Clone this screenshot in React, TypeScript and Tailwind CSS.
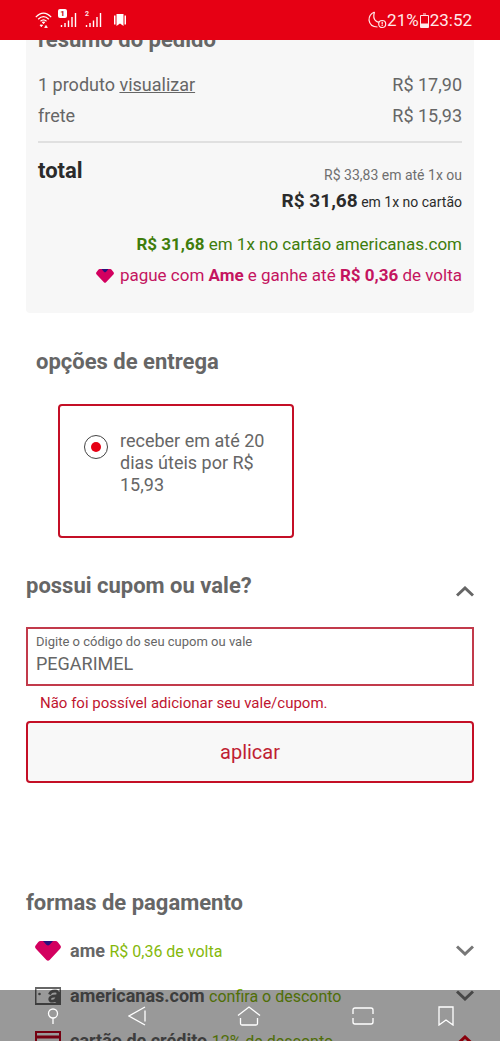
import React, { useState } from 'react';

interface IconProps {
  className?: string;
}

interface ChevronProps extends IconProps {
  up?: boolean;
}

function Chevron({ up = false, className = '' }: ChevronProps) {
  return (
    <svg viewBox="0 0 18 11" className={`h-[11px] w-[18px] ${className}`} fill="none" stroke="currentColor" strokeWidth="3">
      <path d={up ? 'M1 9.5 9 2l8 7.5' : 'M1 1.5 9 9l8-7.5'} />
    </svg>
  );
}

function AmeIcon({ className = '' }: IconProps) {
  return (
    <svg viewBox="0 0 26 20" className={className}>
      <path d="M5.5 0h15q1.4 0 2.4 1.2l2.5 3.4q1.2 1.8-.3 3.2L14.6 19q-1.6 1.6-3.2 0L.9 7.8q-1.5-1.4-.3-3.2l2.5-3.4Q4.1 0 5.5 0Z" fill="#d3005f" />
      <path d="M8 0h10l-3.4 3.8q-1.6 1.5-3.2 0Z" fill="#26107c" />
    </svg>
  );
}

function StoreCardIcon() {
  return (
    <svg viewBox="0 0 26 18" className="h-[18px] w-[26px]">
      <path d="M0 0h26v18H0Z" fill="#666" />
      <path d="M1.5 2H24.5v14H1.5Z" fill="#fff" />
      <circle cx="4.5" cy="7" r="1.3" fill="#666" />
      <path d="M14.5 7.5Q15.500 4 20 4q3.500 0 2.800 3.500l-1.600 8M22 8.800q-7-.3-7.300 3.200 0 2.300 2.600 2.200 3.200-.2 4.300-3.200" fill="none" stroke="#666" strokeWidth="2.800" />
      <path d="M22 5h3v12h-4Z" fill="#666" />
    </svg>
  );
}

function CreditCardIcon() {
  return (
    <svg viewBox="0 0 26 20" className="h-5 w-[26px]">
      <rect x="1" y="1" width="24" height="18" fill="#fff" stroke="#c4001d" strokeWidth="2" />
      <path d="M1 6h24" stroke="#c4001d" strokeWidth="3" />
    </svg>
  );
}

function SignalIcon() {
  return (
    <svg viewBox="0 0 17 14" className="h-3.5 w-[17px]" fill="none" stroke="#fff" strokeWidth="1.4">
      <path d="M1.5 14v-2M5 14v-4M8.5 14V7.5M12 14V4M15.5 14V0" />
    </svg>
  );
}

function StatusBar() {
  return (
    <header className="fixed inset-x-0 top-0 z-10 flex h-10 items-center justify-between bg-[#e60014] pr-7 pl-[35px] text-[#ffe9e9]">
      <div className="flex items-center">
        <svg viewBox="0 0 17 17" className="h-[17px] w-[17px]" fill="none" stroke="#fff" strokeWidth="1.2">
          <path d="M.8 5.2Q8.5-2.8 16.2 5.2M3.2 7.200q5.300-5.200 10.600 0M5.500 9.200q3-2.800 6 0" />
          <path d="M7.200 10h2.600L8.500 11.800ZM5 13h2.600l-1.300 1.800ZM12.300 15.500H9.700L11 13.500Z" fill="#fff" strokeWidth=".8" />
        </svg>
        <div className="relative ml-2">
          <SignalIcon />
          <span className="absolute -top-1 -left-0.5 flex size-[9px] items-center justify-center rounded-xs bg-white text-[8px] font-bold text-[#c00010]">1</span>
        </div>
        <div className="relative ml-2">
          <SignalIcon />
          <span className="absolute -top-0.5 left-0 text-[7px] leading-[7px] font-bold">2</span>
        </div>
        <svg viewBox="0 0 12 12" className="ml-3 h-3 w-3" fill="#fff">
          <path d="M2.5 0h7v12L6 9.5 2.5 12ZM0 1.5h1.5v9H0ZM10.5 1.5H12v9h-1.5Z" />
        </svg>
      </div>
      <div className="flex items-center text-[17px] leading-5">
        <svg viewBox="0 0 19 18" className="h-[18px] w-[19px]" fill="none" stroke="currentColor" strokeWidth="1.2">
          <path d="M6.5 1Q.8 3.5 1 9.2 2 16 9.5 16M6.5 1q-2 6.5 1.5 9 1.2 1 3 1.2" />
          <circle cx="14.2" cy="13" r="3.5" />
          <path d="M14.2 10.8v2.6M14.2 14v1" />
        </svg>
        <span>21%</span>
        <svg viewBox="0 0 9 15" className="mx-px h-[15px] w-[9px]" fill="none" stroke="currentColor">
          <path d="M.5 2.5h8v12h-8ZM3 1h3" />
          <path d="M1 11h7v3H1Z" fill="currentColor" />
        </svg>
        <span>23:52</span>
      </div>
    </header>
  );
}

function NavBar() {
  return (
    <nav className="fixed inset-x-0 bottom-0 z-10 flex h-[51px] items-center justify-between bg-black/40 pr-[46px] pl-[43px] text-white">
      <button aria-label="Ocultar barra" className="flex w-5 justify-center">
        <svg viewBox="0 0 12 16" className="h-4 w-3" fill="none" stroke="currentColor" strokeWidth="1.3">
          <circle cx="6" cy="5.5" r="4.5" />
          <path d="M6 10v6" />
        </svg>
      </button>
      <div className="flex items-center gap-[91px]">
        <button aria-label="Voltar">
          <svg viewBox="0 0 18 20" className="h-5 w-[18px]" fill="none" stroke="currentColor" strokeWidth="1.3">
            <path d="M17 1 1 10l16 9M17 4.5v11" />
          </svg>
        </button>
        <button aria-label="Início">
          <svg viewBox="0 0 24 20" className="h-5 w-6" fill="none" stroke="currentColor" strokeWidth="1.3">
            <path d="M1 9.5 12 1l11 8.5M3.5 12v5.5q0 1.5 1.5 1.5h14q1.5 0 1.5-1.5V12" />
          </svg>
        </button>
        <button aria-label="Recentes">
          <svg viewBox="0 0 22 18" className="h-[18px] w-[22px]" fill="none" stroke="currentColor" strokeWidth="1.3">
            <path d="M1 7V3q0-2 2-2h16q2 0 2 2v4M1 11v4q0 2 2 2h16q2 0 2-2v-4" />
          </svg>
        </button>
      </div>
      <button aria-label="Salvar">
        <svg viewBox="0 0 16 20" className="h-5 w-4" fill="none" stroke="currentColor" strokeWidth="1.3">
          <path d="M1 1h14v18l-7-5-7 5Z" />
        </svg>
      </button>
    </nav>
  );
}

function OrderSummary() {
  return (
    <section className="rounded-b-sm bg-[#f7f7f7] px-3 pt-7 pb-[22px]">
      <h2 className="text-[22px] leading-6 font-bold">resumo do pedido</h2>

      <dl className="mt-[17px] border-b-2 border-[#e0e0e0] pb-2.5 text-lg leading-[31px]">
        <div className="flex justify-between">
          <dt>
            1 produto <a href="#produtos" className="underline">visualizar</a>
          </dt>
          <dd>R$ 17,90</dd>
        </div>
        <div className="flex justify-between">
          <dt>frete</dt>
          <dd>R$ 15,93</dd>
        </div>
      </dl>

      <div className="flex justify-between pt-4 text-[#2b2b2b]">
        <h3 className="text-[22px] leading-6 font-bold">total</h3>
        <div className="pt-1 text-right text-sm leading-[25px]">
          <p className="text-[#6f6f6f]">R$ 33,83 em até 1x ou</p>
          <p>
            <strong className="text-[19px] leading-[25px]">R$ 31,68</strong> em 1x no cartão
          </p>
        </div>
      </div>

      <div className="mt-3.5 text-right text-[17px] leading-[31px]">
        <p className="text-[#3f7d0c]">
          <strong>R$ 31,68</strong> em 1x no cartão americanas.com
        </p>
        <p className="flex items-center justify-end text-[#c4145f]">
          <AmeIcon className="mr-1.5 h-3.5 w-[18px]" />
          <span>
            pague com <strong>Ame</strong> e ganhe até <strong>R$ 0,36</strong> de volta
          </span>
        </p>
      </div>
    </section>
  );
}

function DeliveryOptions() {
  return (
    <section className="px-2.5 pt-[37px]">
      <h2 className="text-[22px] leading-6 font-bold">opções de entrega</h2>
      <label className="mt-[30px] ml-[22px] flex h-[134px] w-[236px] gap-3 rounded-sm border-2 border-[#c40f26] px-6 pt-6">
        <input
          type="radio"
          name="entrega"
          defaultChecked
          className="mt-[5px] flex size-6 shrink-0 appearance-none items-center justify-center rounded-full border border-[#444] before:size-2.5 before:rounded-full checked:before:bg-[#e60014]"
        />
        <span className="text-lg leading-[22px]">receber em até 20 dias úteis por R$ 15,93</span>
      </label>
    </section>
  );
}

function Coupon() {
  const [code, setCode] = useState('PEGARIMEL');

  return (
    <section className="pt-[34px]">
      <div className="flex items-center justify-between">
        <h2 className="text-[22px] leading-7 font-bold">possui cupom ou vale?</h2>
        <button aria-label="Recolher" className="pt-2.5">
          <Chevron up />
        </button>
      </div>

      <div className="mt-[27px] flex h-[59px] flex-col border-2 border-[#c23a4b] px-2 pt-[3px]">
        <label htmlFor="cupom" className="text-[13px] leading-5">
          Digite o código do seu cupom ou vale
        </label>
        <input
          id="cupom"
          value={code}
          onChange={(e) => setCode(e.target.value)}
          className="w-full text-lg leading-6 outline-none"
        />
      </div>
      <p className="px-3.5 pt-[5px] text-[15px] leading-6 text-[#c01530]">Não foi possível adicionar seu vale/cupom.</p>
      <button className="mt-1.5 h-[62px] w-full rounded-sm border-2 border-[#c40f26] bg-[#f8f8f8] text-xl text-[#c01f33]">
        aplicar
      </button>
    </section>
  );
}

const payments = [
  { name: 'ame', note: 'R$ 0,36 de volta', icon: <AmeIcon className="h-5 w-[26px]" />, arrow: <Chevron className="text-[#777]" /> },
  { name: 'americanas.com', note: 'confira o desconto', icon: <StoreCardIcon />, arrow: <Chevron className="text-[#777]" /> },
  { name: 'cartão de crédito', note: '12% de desconto', icon: <CreditCardIcon />, arrow: <Chevron up className="text-[#e60014]" /> },
];

function PaymentMethods() {
  return (
    <section className="pt-[108px]">
      <h2 className="text-[22px] leading-6 font-bold">formas de pagamento</h2>
      <ul className="mt-[13px]">
        {payments.map((p) => (
          <li key={p.name}>
            <button className="flex h-[45px] w-full items-center pl-[9px] text-left">
              {p.icon}
              <span className="ml-[9px] grow text-lg">
                <strong>{p.name}</strong> <span className="text-base text-[#85b80b]">{p.note}</span>
              </span>
              {p.arrow}
            </button>
          </li>
        ))}
      </ul>
    </section>
  );
}

export default function App() {
  return (
    <div className="h-screen overflow-hidden bg-white font-[Roboto,sans-serif] text-[#666]">
      <StatusBar />
      <main className="px-[26px]">
        <OrderSummary />
        <DeliveryOptions />
        <Coupon />
        <PaymentMethods />
      </main>
      <NavBar />
    </div>
  );
}
